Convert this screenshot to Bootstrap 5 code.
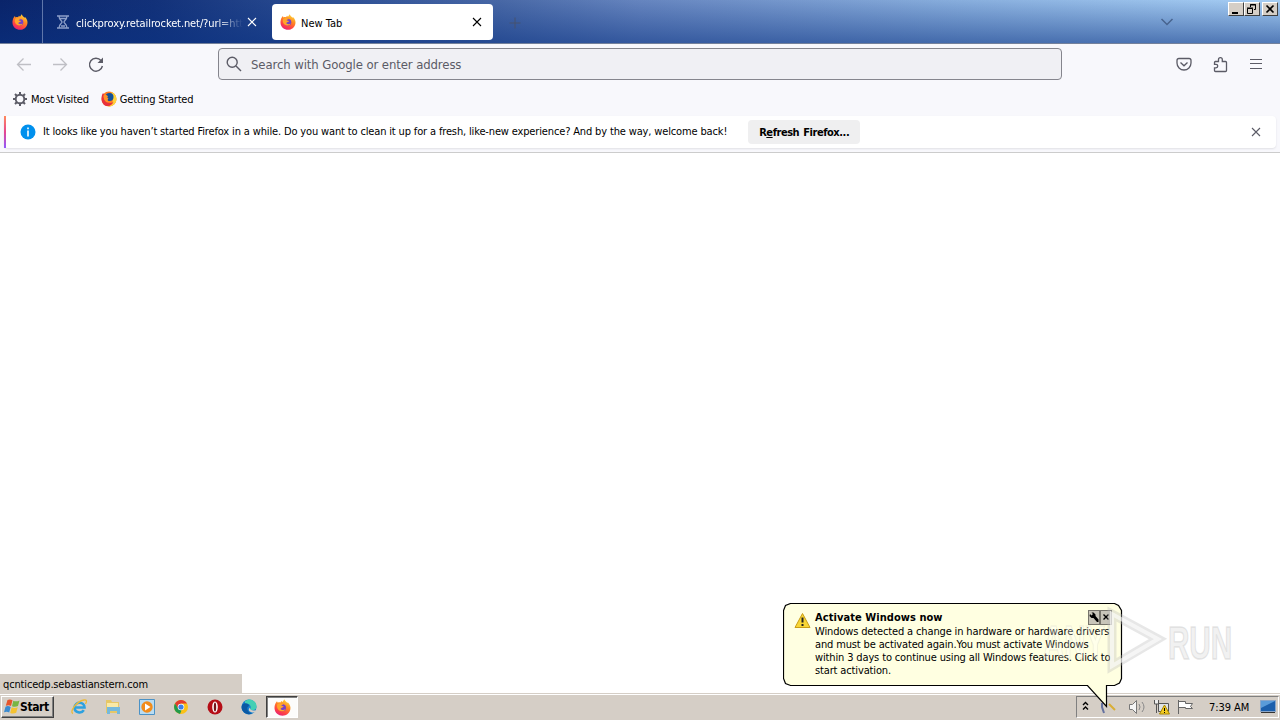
<!DOCTYPE html>
<html lang="en">
<head>
    <meta charset="UTF-8">
    <meta name="viewport" content="width=device-width, initial-scale=1.0">
    <title>New Tab</title>
    <link href="https://cdn.jsdelivr.net/npm/bootstrap@5.3.0/dist/css/bootstrap.min.css" rel="stylesheet">
    <style>
        body {
            width: 1280px;
            height: 720px;
            font-family: "DejaVu Sans Condensed", "DejaVu Sans", sans-serif;
            font-stretch: condensed;
            font-size: 11px;
            letter-spacing: -0.2px;
            line-height: 13px;
            color: #000;
            background: #fff;
        }

        svg {
            display: block;
            flex: none;
        }

        .title-bar {
            height: 44px;
            border-bottom: 1px solid #74819b;
            background:
                linear-gradient(rgba(10, 50, 130, 0), rgba(10, 50, 130, .54)),
                linear-gradient(90deg, #0a246a 0, #123179 12%, #2a4c92 24%, #4868a6 39%, #6685bf 50%, #88aedd 75%, #a6cef4 100%);
        }

        .view-button {
            width: 43px;
            border-right: 1px solid #5f76aa;
            padding-right: 2px;
        }

        .tab-item {
            height: 36px;
            margin-top: 4px;
            border-radius: 4px;
        }

        .tab-back {
            width: 217px;
            margin-left: 4px;
            padding-left: 9px;
            color: #fff;
        }

        .tab-front {
            width: 221px;
            margin-left: 8px;
            padding: 0 11px 0 8px;
            background: #fff;
        }

        .tab-front .tab-name {
            margin: 2px 0 0 5px;
            letter-spacing: 0;
        }

        .tab-label {
            width: 167px;
            margin-left: 6px;
            padding-top: 2px;
            letter-spacing: -0.1px;
            -webkit-mask-image: linear-gradient(90deg, #000 84%, transparent);
            mask-image: linear-gradient(90deg, #000 84%, transparent);
        }

        .tabs-menu {
            margin-top: 18px;
        }

        .win-buttons {
            margin: 2px 2px 0 54px;
        }

        .win-button {
            width: 16px;
            height: 14px;
            background: #d5cec6;
            border: 1px solid;
            border-color: #fff #404040 #404040 #fff;
        }

        .win-close {
            margin-left: 2px;
        }

        .nav-tools {
            height: 40px;
            background: #f8f8fc;
        }

        .address-box {
            width: 844px;
            height: 32px;
            padding-left: 7px;
            border: 1px solid #85858d;
            border-radius: 4px;
            background: #f0f0f4;
            color: #5b5b66;
            font-size: 13px;
            letter-spacing: -0.1px;
        }

        .address-text {
            margin-left: 9px;
        }

        .bookmarks-row {
            height: 30px;
            padding-left: 12px;
            background: #f8f8fc;
        }

        .bookmark-name {
            margin-left: 3px;
        }

        .bookmark-icon {
            margin-left: 12px;
        }

        .notice-wrap {
            height: 39px;
            padding: 2px 4px 4px;
            background: #f8f8fc;
            border-bottom: 1px solid #ccc;
        }

        .notice-box {
            height: 32px;
            padding: 0 15px 0 14px;
            border-radius: 4px;
            background: #fff;
            box-shadow: 0 1px 2px rgba(58, 57, 68, .12);
            border-left: 2px solid;
            border-image: linear-gradient(#ff8a5c, #e6458f 50%, #9059ff) 0 0 0 2;
        }

        .notice-text {
            margin-left: 7px;
            padding-bottom: 1px;
            letter-spacing: -0.147px;
        }

        .refresh-button {
            width: 112px;
            height: 24px;
            margin-left: 21px;
            border-radius: 4px;
            background: #efeff0;
            font-weight: 700;
            letter-spacing: -0.45px;
            word-spacing: 1px;
        }

        .link-status {
            width: 242px;
            height: 19px;
            padding: 4px 3px;
            background: #d5cec6;
            letter-spacing: -0.15px;
        }

        .task-bar {
            height: 27px;
            background: #d5cec6;
            border-top: 1px solid #d5cec6;
            box-shadow: inset 0 1px #fff;
            padding: 2px 1px 2px;
        }

        .start-button {
            width: 53px;
            height: 22px;
            padding-left: 2px;
            border: 1px solid;
            border-color: #fff #404040 #404040 #fff;
            box-shadow: inset -1px -1px #808080;
            font-size: 12px;
            font-weight: 700;
            letter-spacing: -0.4px;
        }

        .task-list {
            padding-left: 8px;
        }

        .task-slot {
            width: 34px;
            height: 22px;
        }

        .task-active {
            width: 32px;
            border: 1px solid;
            border-color: #404040 #fff #fff #404040;
            box-shadow: inset 1px 1px #808080;
            background: #fcfcfb;
        }

        .tray-box {
            width: 203px;
            height: 22px;
            padding: 0 2px 0 5px;
            border: 1px solid;
            border-color: #808080 #fff #fff #808080;
        }

        .clock-text {
            margin-left: 1px;
            letter-spacing: -0.05px;
        }

        .balloon {
            left: 783px;
            top: 603px;
            width: 340px;
            height: 105px;
        }

        .balloon-title {
            font-weight: 700;
            letter-spacing: 0.06px;
        }

        .balloon-body {
            left: 32px;
            top: 8px;
            letter-spacing: -0.14px;
        }

        .balloon-lines {
            padding-top: 1px;
        }

        .balloon-tools {
            right: 11px;
            top: 7px;
        }

        .balloon-tool {
            width: 12px;
            height: 15px;
            background: #c8c5b9;
            border: 1px solid #77756c;
        }

        .watermark {
            left: 1036px;
            top: 602px;
        }
    </style>
</head>
<body class="position-relative overflow-hidden d-flex flex-column">
<!-- shared icons -->
<svg width="0" height="0" class="position-absolute">
    <defs>
        <linearGradient id="foxBody" x1=".8" y1="0" x2=".3" y2="1">
            <stop offset="0" stop-color="#ffe03c"/>
            <stop offset=".4" stop-color="#ff8a22"/>
            <stop offset=".75" stop-color="#ff4145"/>
            <stop offset="1" stop-color="#e52277"/>
        </linearGradient>
        <symbol id="fox" viewBox="0 0 16 16">
            <path fill="url(#foxBody)" d="M1.600 3.800 2.800 2l.8 1.500C4.400 3 5.200 3 6 3.200L7 1.800l1 1L9.700.3c.4 1.500 2 2.400 2.800 3.500l.5-.8c2 2 2.900 4.400 2.400 6.700C14.700 13.300 11.700 15.800 8 15.800S.7 13 .5 9C.4 7 .8 5.200 1.600 3.800Z"/>
            <circle cx="8" cy="8.200" r="3.300" fill="#7542c7"/>
            <path fill="#ffa52a" d="M3.500 4.500c2-1 3.800-.5 5 .8-1 .1-1.500.5-1.800 1.100 1 .2 1.800.3 2.500.7-1 1.100-2 1-3 2 .5 1.200 2.600 1.700 4.500.5-1 2.700-6.200 2.700-7.500-.8-.6-1.600-.4-3 .3-4.300Z"/>
        </symbol>
        <symbol id="cross" viewBox="0 0 10 10">
            <path d="m1 1 8 8M9 1 1 9" fill="none" stroke="currentColor" stroke-width="1.100"/>
        </symbol>
    </defs>
</svg>

<header class="title-bar d-flex">
    <div class="view-button d-flex align-items-center justify-content-center">
        <svg width="16" height="16"><use href="#fox"/></svg>
    </div>
    <div class="tab-item tab-back d-flex align-items-center">
        <svg width="14" height="14" viewBox="0 0 14 14" fill="none" stroke="#8d9fc9" stroke-width="1.300">
            <path d="M1 1h12M1 13h12M3 1c0 4 3 4.500 3 6s-3 2-3 6M11 1c0 4-3 4.500-3 6s3 2 3 6M4 3.500h6M5 11h4"/>
        </svg>
        <div class="tab-label text-nowrap overflow-hidden">clickproxy.retailrocket.net/?url=htt</div>
        <svg width="10" height="10" class="ms-1"><use href="#cross"/></svg>
    </div>
    <div class="tab-item tab-front d-flex align-items-center">
        <svg width="16" height="16"><use href="#fox"/></svg>
        <span class="tab-name">New Tab</span>
        <svg width="10" height="10" class="ms-auto"><use href="#cross"/></svg>
    </div>
    <svg width="12" height="13" viewBox="0 0 12 13" class="ms-3 mt-3" stroke="#46536e"><path d="M6 1.500v11M.5 7h11"/></svg>
    <svg width="14" height="8" viewBox="0 0 14 8" class="tabs-menu ms-auto" fill="none" stroke="#48648f" stroke-width="1.500"><path d="m1.500 1 5.500 5.500L12.500 1"/></svg>
    <div class="win-buttons d-flex">
        <div class="win-button"><svg width="14" height="12"><path d="M3 9h6v2H3z"/></svg></div>
        <div class="win-button"><svg width="14" height="12" fill="none" stroke="#000"><path d="M5.500 4V1.500h5v5H9M5 2h6M2.500 5.500h5v5h-5zM2 5h6"/></svg></div>
        <div class="win-button win-close"><svg width="14" height="12" stroke="#000" stroke-width="1.700"><path d="m3.500 2.500 7 7M10.500 2.500l-7 7"/></svg></div>
    </div>
</header>

<nav class="nav-tools d-flex align-items-center">
    <svg width="218" height="40" fill="none" stroke="#bfbfc5" stroke-width="1.300">
        <path d="M31 20.500H17.500m6-6-6 6 6 6M53 20.500h13.500m-6-6 6 6-6 6"/>
        <path stroke="#5b5b66" stroke-width="1.400" d="M101 16.500a6.500 6.500 0 1 0 1.400 5.500"/>
        <path fill="#5b5b66" stroke="none" d="M103 13.500v5.500h-5.500z"/>
    </svg>
    <div class="address-box d-flex align-items-center">
        <svg width="16" height="16" viewBox="0 0 16 16" fill="none" stroke="#5b5b66" stroke-width="1.400"><circle cx="6.200" cy="6.200" r="5"/><path d="m10 10 5 5"/></svg>
        <span class="address-text">Search with Google or enter address</span>
    </div>
    <svg width="218" height="40" fill="none" stroke="#5b5b66" stroke-width="1.300">
        <path d="M117 14.500h10q2 0 2 2V19a7 7 0 0 1-14 0v-2.500q0-2 2-2ZM118.500 18.500l3.500 3.300 3.500-3.300"/>
        <path d="M153 17.500h3.500v-2a1.900 1.900 0 0 1 3.800 0v2h3.200q1 0 1 1v8q0 1-1 1h-10q-1 0-1-1v-2.700h1.500a1.700 1.700 0 0 0 0-3.500H152.500v-1.800q0-1 1-1"/>
        <path stroke-width="1" d="M188 15.500h12M188 19.500h12M188 24.500h12"/>
    </svg>
</nav>

<div class="bookmarks-row d-flex align-items-center">
    <svg width="16" height="16" viewBox="0 0 16 16" fill="none" stroke="#5b5b66">
        <circle cx="8" cy="8" r="4.300" stroke-width="1.900"/>
        <path stroke-width="2" d="M8 1v3M8 12v3M1 8h3M12 8h3M3 3l2 2M11 11l2 2M13 3l-2 2M5 11l-2 2"/>
    </svg>
    <span class="bookmark-name">Most Visited</span>
    <svg width="16" height="16" viewBox="0 0 16 16" class="bookmark-icon">
        <circle cx="8" cy="8" r="7.500" fill="#ff7a20"/>
        <path fill="#ffd43a" d="M10 1c4 1 6 5 5.300 8.500S11 16 7 15.300C13 14 13 6 10 1Z"/>
        <path fill="#e8323c" d="M1 4 2 2l1 1.500C2 7 4 12 8.500 12c2 0 3-.5 4-1.500-1 3.500-4.500 5.500-8 4.200C.5 13 0 8 1 4Z"/>
        <circle cx="8.500" cy="6" r="4" fill="#135199"/>
        <path fill="#ff9327" d="M2.500 4.500c2-.8 3.500-.3 4.500 1-1 .5-.8 1.500.5 2-1 1-1.500 2.500 1 3-3 1.500-6-.5-6-6Z"/>
    </svg>
    <span class="bookmark-name">Getting Started</span>
</div>

<div class="notice-wrap">
    <div class="notice-box d-flex align-items-center">
        <svg width="16" height="16" viewBox="0 0 16 16"><circle cx="8" cy="8" r="7.500" fill="#0090ed"/><path fill="#fff" d="M7.200 3.500h1.600v1.700H7.200zM7.200 6.500h1.600v6H7.200z"/></svg>
        <span class="notice-text text-nowrap">It looks like you haven’t started Firefox in a while. Do you want to clean it up for a fresh, like-new experience? And by the way, welcome back!</span>
        <div class="refresh-button d-flex align-items-center justify-content-center"><span>R<u>e</u>fresh Firefox...</span></div>
        <svg width="10" height="10" class="ms-auto" color="#5b5b66"><use href="#cross"/></svg>
    </div>
</div>

<main class="flex-grow-1 d-flex align-items-end">
    <div class="link-status">qcnticedp.sebastianstern.com</div>
</main>

<footer class="task-bar d-flex align-items-start">
    <div class="start-button d-flex align-items-center">
        <svg width="16" height="16" viewBox="0 0 16 16">
            <path fill="#e6552b" d="M3.500 1c2-1 3.500-.6 5 .3L7 7C5.500 6 4 6 1.800 6.700Z"/>
            <path fill="#78b544" d="M9.300 1.700c2 1 4 .8 6.200-.2L14 7c-2 1-4 1-6 .2Z"/>
            <path fill="#3b8bd0" d="M1.500 7.700c2-1 3.700-.6 5.200.3l-1.500 5.500c-1.500-1-3.200-1-5.200-.3Z"/>
            <path fill="#f5c231" d="M7.700 8.300c2 1 4 .8 6-.1l-1.500 5.500c-2 1-4 1-6 .2Z"/>
        </svg>
        <span>Start</span>
    </div>
    <div class="task-list d-flex align-items-center">
        <div class="task-slot d-flex align-items-center justify-content-center">
            <svg width="18" height="18" viewBox="0 0 18 18" fill="none"><path stroke="#2da1df" stroke-width="2.600" d="M4.500 9.500h10c0-6-9.500-6.500-10 0 0 5.500 7 6.500 9.300 2.700"/><path stroke="#edb936" stroke-width="1.300" d="M3 15.500c-4-1 3-12 11-13.500 3-.5 3 1.500 1.500 4"/></svg>
        </div>
        <div class="task-slot d-flex align-items-center justify-content-center">
            <svg width="18" height="18" viewBox="0 0 18 18"><path fill="#e6c767" d="M2 2h5l1 2h7v11H2z"/><path fill="#f9e9a6" d="M3 5h11v6H3z"/><path fill="#75b9dc" d="M3 9h13v7h-3v-3H6v3H3z"/></svg>
        </div>
        <div class="task-slot d-flex align-items-center justify-content-center">
            <svg width="16" height="16" viewBox="0 0 16 16"><path fill="#b9dcf2" stroke="#4b92c6" d="M.5.500h15v15H.5z"/><circle cx="8" cy="8" r="5.700" fill="#f28c1b"/><path fill="#fff" d="m6 4.500 5.500 3.500L6 11.500z"/></svg>
        </div>
        <div class="task-slot d-flex align-items-center justify-content-center">
            <svg width="14" height="14" viewBox="0 0 14 14"><circle cx="7" cy="7" r="7" fill="#fbc116"/><path fill="#e33b2e" d="M1 3.500A7 7 0 0 1 13 3.500H7L4 9Z"/><path fill="#229a4c" d="M1 3.500 4.500 9l3 1.500-1.500 3.400A7 7 0 0 1 1 3.500Z"/><circle cx="7" cy="7" r="3.300" fill="#fff"/><circle cx="7" cy="7" r="2.600" fill="#3c7fe8"/></svg>
        </div>
        <div class="task-slot d-flex align-items-center justify-content-center">
            <svg width="16" height="16" viewBox="0 0 16 16"><circle cx="8" cy="8" r="7.500" fill="#b50d16"/><ellipse cx="8" cy="8" rx="2.800" ry="5.500" fill="#fff"/><ellipse cx="8" cy="8" rx="1.200" ry="4.600" fill="#74151a"/></svg>
        </div>
        <div class="task-slot d-flex align-items-center justify-content-center">
            <svg width="16" height="16" viewBox="0 0 16 16"><circle cx="8" cy="8" r="7.500" fill="#1680cf"/><path fill="#43cfb4" d="M4 2c5-4 12 0 11.500 6-.3 3-4 4-6.500 2.500C11 8 9 4 4 5Z"/><path fill="#d5cec6" d="M9 8.500c-.5 2.500 3 4 6 2.500l-1.500 2.500C9 14 6 11 9 8.500Z"/><path fill="#0c59a4" d="M1 6c3-3 7-1.500 7 1-3 1-2 6 3 7.500C5 17-1 12 1 6Z"/></svg>
        </div>
        <div class="task-slot task-active d-flex align-items-center justify-content-center">
            <svg width="17" height="17"><use href="#fox"/></svg>
        </div>
    </div>
    <div class="tray-box d-flex align-items-center ms-auto">
        <svg width="126" height="20" fill="none" stroke="#000">
            <path stroke-width="1.400" d="m1 8 2.500-2.500L6 8M1 12.500 3.500 10 6 12.500"/>
            <path stroke="#6572a0" stroke-width="2" d="M20 6v4l2 6"/><path stroke="#d9ae35" stroke-width="2" d="m27 7 6 6"/>
            <path fill="#f5f5f5" stroke="#777" d="M47.500 7.500h3l4-4v13l-4-4h-3z"/><path stroke="#888" d="M57 7q2 3 0 6M60 5q4 5 0 10"/>
            <path fill="#dfe3e5" stroke="#555" d="M76.500 6.500h10v8h-10z"/><path fill="#eee" stroke="#555" d="M72.500 3v4h4V3M74.500 7v9"/><path fill="#f4cc22" stroke="#a98600" d="m82.500 8 5 9h-10z"/><path d="M82.500 11v3M82.500 15v1"/>
            <path fill="#fff" stroke="#666" d="M96.500 17V3M96.500 4.500h7v2h7l-2 3 2 2h-7v-1h-7"/>
        </svg>
        <span class="clock-text text-nowrap">7:39 AM</span>
        <svg width="16" height="14" viewBox="0 0 16 14" class="ms-auto"><path fill="#1c5fac" stroke="#8aa6c9" d="M.5.500h15v11H.5z"/><path fill="#5a9bd9" d="M1 1h14L1 8z"/><path fill="#333" d="M1 12h14v1H1z"/></svg>
    </div>
</footer>

<aside class="balloon position-absolute">
    <svg width="340" height="105">
        <path fill="#ffffe1" stroke="#000" stroke-width="1.200" d="M7.500.500h324l4 2 3 5v68l-2 4.500-5 2.500H323.500v21L304.500 82.500H7.500l-5-2-2-5v-68l2-5Z"/>
        <path fill="#f8d636" stroke="#c99c15" stroke-linejoin="round" d="m19.500 10.500 7.500 14H12z"/>
        <path stroke="#222" stroke-width="2" d="M19.500 14.500v5M19.500 21v2"/>
    </svg>
    <div class="balloon-body position-absolute text-nowrap">
        <div class="balloon-title">Activate Windows now</div>
        <div class="balloon-lines">
            <div>Windows detected a change in hardware or hardware drivers</div>
            <div>and must be activated again.You must activate Windows</div>
            <div>within 3 days to continue using all Windows features. Click to</div>
            <div>start activation.</div>
        </div>
    </div>
    <div class="balloon-tools position-absolute d-flex">
        <div class="balloon-tool"><svg width="10" height="13"><path d="M1 3 2.500 4.500 4 3 2.500 1.500h2l2 2V5l3 3.500V11H8L4.500 7H2.500L.5 5z"/></svg></div>
        <div class="balloon-tool"><svg width="10" height="13" stroke="#000" stroke-width="1.400"><path d="m2.500 3.500 5 5M7.500 3.500l-5 5"/></svg></div>
    </div>
</aside>

<!-- faint logo over the corner -->
<svg class="watermark position-absolute" width="230" height="76" fill="none" font-family="Liberation Sans, sans-serif" font-size="46" font-weight="700">
    <g fill="#fff" fill-opacity=".55" stroke="#bbb" stroke-opacity=".35" stroke-width="1.500">
        <text x="7" y="56" textLength="62" lengthAdjust="spacingAndGlyphs" opacity=".5">ANY</text>
        <text x="132" y="57" textLength="64" lengthAdjust="spacingAndGlyphs" fill="#e6e6e6">RUN</text>
    </g>
    <path stroke="#bbb" stroke-opacity=".35" stroke-width="9" d="M76 12v52l46-27Z"/>
    <path stroke="#fff" stroke-opacity=".6" stroke-width="4" d="M76 12v52l46-27Z"/>
</svg>
<script src="https://cdn.jsdelivr.net/npm/bootstrap@5.3.0/dist/js/bootstrap.bundle.min.js"></script>
</body>
</html>
